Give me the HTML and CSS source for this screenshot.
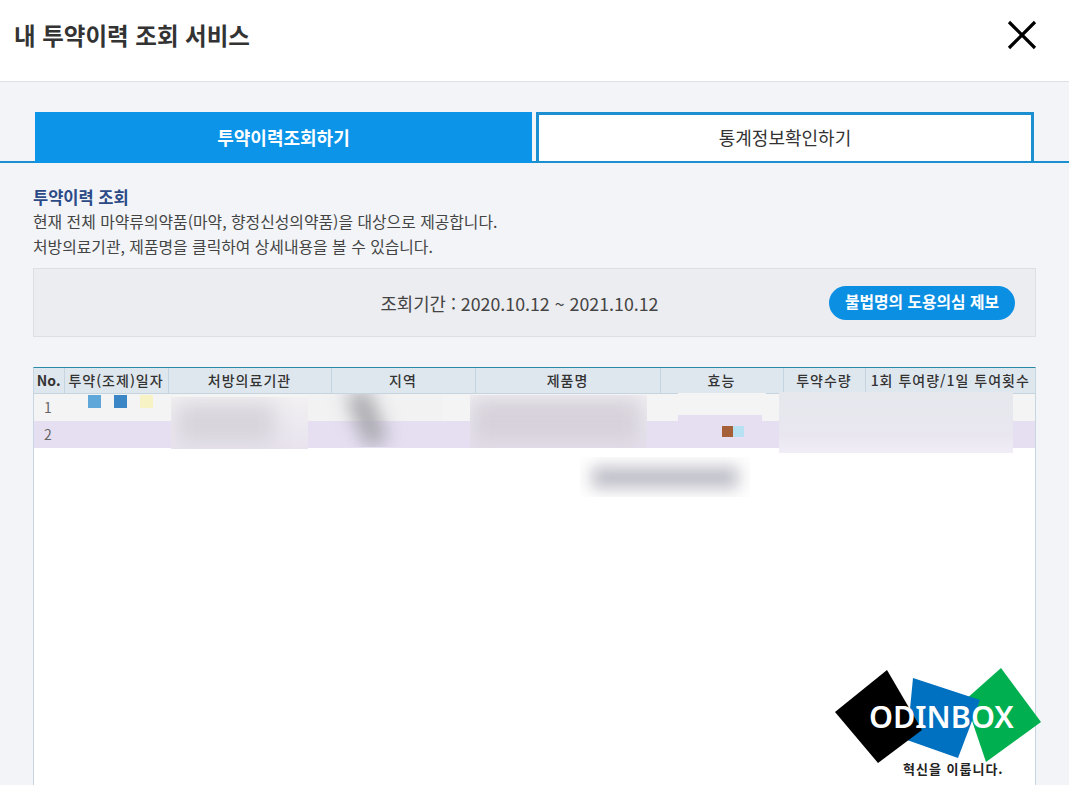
FILE: index.html
```html
<!DOCTYPE html>
<html lang="ko">
<head>
  <meta charset="utf-8">
  <title>내 투약이력 조회 서비스</title>
  <link rel="stylesheet" href="styles.css">
</head>
<body>
  <div class="popup">
    <div class="popup-head">
      <h1>내 투약이력 조회 서비스</h1>
      <button class="close-btn" aria-label="닫기">
        <svg width="30" height="30" viewBox="0 0 30 30">
          <path d="M2 2L28 28M28 2L2 28" stroke="#000" stroke-width="3.2" fill="none"/>
        </svg>
      </button>
    </div>

    <div class="popup-body">
      <div class="tabs">
        <a class="tab on">투약이력조회하기</a>
        <a class="tab">통계정보확인하기</a>
      </div>

      <div class="content">
        <div class="guide">
          <h2>투약이력 조회</h2>
          <p>현재 전체 마약류의약품(마약, 향정신성의약품)을 대상으로 제공합니다.</p>
          <p>처방의료기관, 제품명을 클릭하여 상세내용을 볼 수 있습니다.</p>
        </div>

        <div class="period">
          <span class="period-text">조회기간 : 2020.10.12 ~ 2021.10.12</span>
          <a class="report-btn">불법명의 도용의심 제보</a>
        </div>

        <div class="grid">
          <table>
            <colgroup>
              <col class="c-no"><col class="c-date"><col class="c-org"><col class="c-area">
              <col class="c-name"><col class="c-effect"><col class="c-qty"><col class="c-dose">
            </colgroup>
            <thead>
              <tr>
                <th class="no-head">No.</th>
                <th>투약(조제)일자</th>
                <th>처방의료기관</th>
                <th>지역</th>
                <th>제품명</th>
                <th>효능</th>
                <th>투약수량</th>
                <th>1회 투여량/1일 투여횟수</th>
              </tr>
            </thead>
            <tbody>
              <tr class="odd">
                <td class="num">1</td>
                <td><div class="marks date-marks"><i class="m-blue"></i><i class="m-navy"></i><i class="m-yellow"></i></div></td>
                <td></td><td></td><td></td><td></td><td></td><td></td>
              </tr>
              <tr class="even">
                <td class="num">2</td>
                <td></td><td></td><td></td><td></td>
                <td><div class="marks effect-marks"><i class="m-brown"></i><i class="m-sky"></i></div></td>
                <td></td><td></td>
              </tr>
            </tbody>
          </table>

          <!-- blurred out personal data -->
          <div class="patch p-org"><span class="smudge"></span></div>
          <div class="patch p-area"><span class="smudge"></span></div>
          <div class="patch p-name"><span class="smudge"></span></div>
          <div class="patch p-effect"></div>
          <div class="patch p-effect2"></div>
          <div class="patch p-qty"></div>
          <div class="patch p-float"><span class="smudge"></span></div>
        </div>
      </div>
    </div>

    <div class="watermark">
      <svg width="208" height="100" viewBox="0 0 208 100">
        <polygon points="166,0 206,54 151,94 130,32" fill="#00b050"/>
        <polygon points="78,10 145,32 123,90 72,72" fill="#0070c0"/>
        <polygon points="52,2 87,62 43,95 0,44" fill="#000"/>
        <text x="34" y="60" class="wm-name">ODINBOX</text>
      </svg>
      <span class="wm-slogan">혁신을 이룹니다.</span>
    </div>
  </div>
</body>
</html>
```

FILE: styles.css
```css
* {
  box-sizing: border-box;
}
html, body {
  margin: 0;
  height: 100%;
  overflow: hidden;
}
body {
  font-family: "Noto Sans CJK KR", "Noto Sans", sans-serif;
  color: #333;
  background-color: #f2f4f7;
}
.popup {
  position: relative;
  height: 785px;
  overflow: hidden;
}
.popup-head {
  display: flex;
  justify-content: space-between;
  align-items: center;
  height: 82px;
  padding: 0 32px 12px 14px;
  background-color: #fff;
  border-bottom: 1px solid #dcdfe3;
}
.popup-head h1 {
  margin: 0;
  font-size: 23.5px;
  font-weight: 700;
  color: #333;
}
.close-btn {
  display: flex;
  padding: 0;
  border: none;
  background: none;
  cursor: pointer;
}
.popup-body {
  padding-top: 30px;
}
.tabs {
  display: flex;
  gap: 4px;
  height: 51px;
  padding: 0 35px;
  border-bottom: 2px solid #1b8fd0;
}
.tab {
  flex: 1;
  display: flex;
  justify-content: center;
  align-items: center;
  height: 51px;
  padding-bottom: 3px;
  font-size: 18px;
  color: #333;
  background-color: #fff;
  border: 3px solid #1b8fd0;
  border-bottom-width: 2px;
}
.tab.on {
  flex: 0 0 497px;
  font-weight: 700;
  color: #fff;
  background-color: #0b94e8;
  border-color: #0b94e8;
}
.content {
  padding: 22px 33px 0;
}
.guide h2 {
  margin: 0;
  font-size: 16.5px;
  font-weight: 700;
  line-height: 24px;
  color: #2b4a86;
}
.guide p {
  margin: 0;
  font-size: 15.85px;
  line-height: 25px;
  color: #444;
}
.period {
  position: relative;
  display: flex;
  justify-content: center;
  align-items: center;
  height: 69px;
  margin-top: 9px;
  padding-right: 30px;
  background-color: #ecedf0;
  border: 1px solid #dcdfe3;
}
.period-text {
  font-size: 17.8px;
  color: #444;
}
.report-btn {
  position: absolute;
  top: 17px;
  right: 20px;
  width: 186px;
  height: 34px;
  font-size: 15.8px;
  font-weight: 700;
  line-height: 32px;
  text-align: center;
  color: #fff;
  background-color: #0b8fe3;
  border-radius: 17px;
}
.grid {
  position: relative;
  height: 500px;
  margin-top: 30px;
  background-color: #fff;
  border: 1px solid #c6d6e2;
  border-top: 1px solid #2a8ba8;
}
table {
  width: 100%;
  table-layout: fixed;
  border-collapse: collapse;
}
.c-no { width: 30px; }
.c-date { width: 104px; }
.c-org { width: 163px; }
.c-area { width: 144px; }
.c-name { width: 185px; }
.c-effect { width: 123px; }
.c-qty { width: 82px; }
th {
  height: 25px;
  padding: 0;
  font-size: 14px;
  font-weight: 500;
  line-height: 20px;
  letter-spacing: 1px;
  white-space: nowrap;
  color: #333;
  background-color: #dfe7ee;
  border-left: 1px solid #c6d4e0;
  border-bottom: 1px solid #c6d4e0;
}
th:first-child {
  border-left: none;
}
.no-head {
  font-weight: 700;
  letter-spacing: 0;
}
td {
  height: 27px;
  padding: 0;
  vertical-align: top;
}
.odd td {
  background-color: #f5f4f5;
}
.even td {
  background-color: #e6dff2;
}
.num {
  font-size: 14px;
  line-height: 27px;
  padding-left: 10px;
  color: #666;
}
.marks {
  display: flex;
}
.marks i {
  display: block;
}
.date-marks {
  gap: 13px;
  padding: 1px 0 0 24px;
}
.date-marks i {
  width: 13px;
  height: 13px;
}
.effect-marks {
  padding: 5px 0 0 62px;
}
.effect-marks i {
  width: 11px;
  height: 11px;
}
.m-blue { background-color: #5fa7d9; }
.m-navy { background-color: #3b86c5; }
.m-yellow { background-color: #f7f3c4; }
.m-brown { background-color: #a5603a; }
.m-sky { background-color: #b7e0f2; }

.patch {
  position: absolute;
  overflow: hidden;
}
.smudge {
  position: absolute;
  display: block;
  filter: blur(10px);
}
.p-org {
  left: 137px;
  top: 29px;
  width: 137px;
  height: 52px;
  background: linear-gradient(#f2f0f2, #e8e3ee);
}
.p-org .smudge {
  left: 6px;
  top: 6px;
  width: 98px;
  height: 40px;
  background-color: #d8d4dc;
}
.p-area {
  left: 274px;
  top: 26px;
  width: 134px;
  height: 53px;
  background: linear-gradient(#f3f2f3 50%, #e6dff2 50%);
}
.p-area .smudge {
  left: 48px;
  top: -4px;
  width: 22px;
  height: 56px;
  background-color: #a2a2a8;
  transform: rotate(-22deg);
}
.p-name {
  left: 436px;
  top: 27px;
  width: 177px;
  height: 53px;
  background: linear-gradient(#f0eff1, #e4dfec);
}
.p-name .smudge {
  left: 2px;
  top: 4px;
  width: 168px;
  height: 44px;
  background-color: #d6d1da;
}
.p-effect {
  left: 644px;
  top: 25px;
  width: 88px;
  height: 22px;
  background-color: #f5f4f5;
}
.p-effect2 {
  left: 644px;
  top: 47px;
  width: 84px;
  height: 7px;
  background-color: #e6dff2;
}
.p-qty {
  left: 745px;
  top: 24px;
  width: 234px;
  height: 61px;
  background: linear-gradient(#e6e8ee, #e9e6ef 70%, #f1edf6);
}
.p-float {
  left: 546px;
  top: 89px;
  width: 170px;
  height: 40px;
  background-color: #fefefe;
}
.p-float .smudge {
  left: 12px;
  top: 10px;
  width: 146px;
  height: 21px;
  filter: blur(8px);
  background-color: #bcbcc6;
}

.watermark {
  position: absolute;
  left: 835px;
  top: 668px;
  width: 208px;
  height: 110px;
}
.wm-name {
  font-family: "Noto Sans", sans-serif;
  font-size: 30.5px;
  font-weight: 600;
  fill: #fff;
}
.wm-slogan {
  position: absolute;
  left: 68px;
  top: 93px;
  font-size: 13px;
  font-weight: 700;
  line-height: 16px;
  letter-spacing: 1px;
  color: #222;
  white-space: nowrap;
}
```
